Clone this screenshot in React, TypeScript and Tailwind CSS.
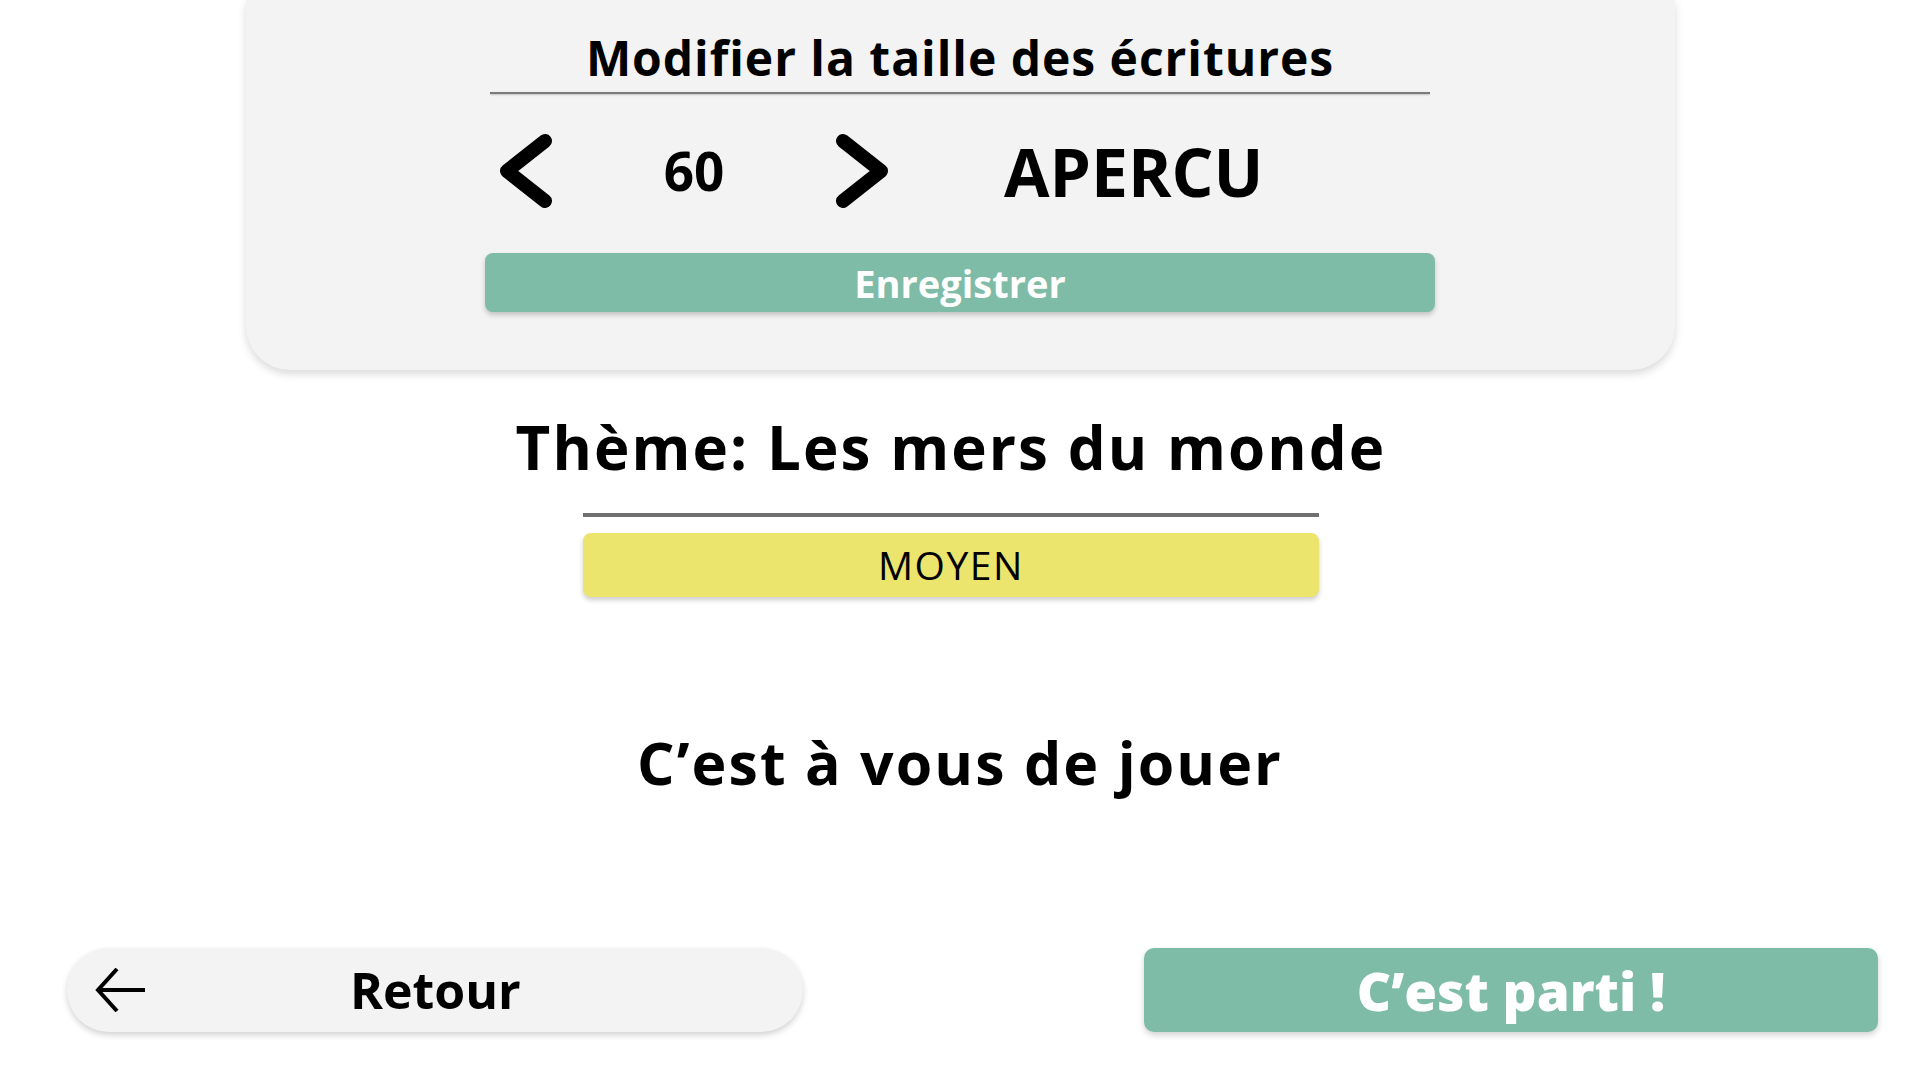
import React from "react";

const font = { fontFamily: '"Open Sans", "Noto Sans", sans-serif' };

function Chevron({ dir }: { dir: "left" | "right" }) {
  const pts = dir === "left" ? "49,8 11,38 49,68" : "9,8 47,38 9,68";
  return (
    <svg width="58" height="76" viewBox="0 0 58 76">
      <polyline
        points={pts}
        fill="none"
        stroke="#000"
        strokeWidth="14"
        strokeLinecap="round"
        strokeLinejoin="round"
      />
    </svg>
  );
}

export default function App() {
  return (
    <div className="w-full h-[1080px] bg-white flex flex-col items-center text-black" style={font}>
      {/* settings card */}
      <div className="w-[1429px] h-[370px] shrink-0 bg-[#f3f3f3] rounded-b-[44px] shadow-[0_4px_8px_rgba(0,0,0,0.15)] flex flex-col items-center pt-[30px]">
        <h2 className="text-[48px] leading-[56px] font-bold tracking-[0.02em]">Modifier la taille des écritures</h2>
        <div className="w-[940px] h-[2px] mt-[6px] bg-[#7a7a7a] shadow-[0_1px_2px_rgba(0,0,0,0.2)]" />
        <div className="w-[940px] flex items-center mt-[39px] pl-[6px]">
          <Chevron dir="left" />
          <span className="ml-[106px] w-[68px] text-center text-[53px] font-bold leading-[76px]">60</span>
          <span className="ml-[106px]">
            <Chevron dir="right" />
          </span>
          <span className="ml-[112px] text-[66px] font-bold leading-[76px]">APERCU</span>
        </div>
        <button className="w-[950px] h-[59px] mt-[44px] rounded-[8px] bg-[#7fbca7] text-white text-[38px] font-bold leading-none shadow-[0_3px_5px_rgba(0,0,0,0.2)]">
          Enregistrer
        </button>
      </div>

      {/* theme */}
      <div className="flex flex-col items-center -ml-[18px]">
        <h1 className="mt-[42px] text-[60px] font-bold leading-[70px] tracking-[0.035em]">Thème: Les mers du monde</h1>
        <div className="w-[736px] h-[4px] bg-[#707070] mt-[31px]" />
        <div className="w-[736px] h-[64px] mt-[16px] rounded-[8px] bg-[#ebe56e] flex items-center justify-center text-[39px] tracking-[0.04em] shadow-[0_3px_5px_rgba(0,0,0,0.2)]">
          MOYEN
        </div>
      </div>

      <p className="mt-[130px] text-[59px] font-bold leading-[70px] tracking-[0.035em]">C’est à vous de jouer</p>

      {/* bottom actions */}
      <div className="w-full flex justify-between pl-[67px] pr-[42px] mt-[151px]">
        <button className="w-[736px] h-[84px] rounded-full bg-[#f3f3f3] shadow-[0_3px_6px_rgba(0,0,0,0.18)] flex items-center pl-[27px]">
          <svg width="52" height="44" viewBox="0 0 52 44">
            <path d="M51 22H4M23 1L4 22l19 21" fill="none" stroke="#000" strokeWidth="4" />
          </svg>
          <span className="ml-[204px] text-[50px] font-bold leading-none">Retour</span>
        </button>
        <button className="w-[734px] h-[84px] rounded-[10px] bg-[#7fbca7] shadow-[0_3px_6px_rgba(0,0,0,0.18)] text-white text-[53px] font-extrabold leading-none">
          C’est parti !
        </button>
      </div>
    </div>
  );
}
